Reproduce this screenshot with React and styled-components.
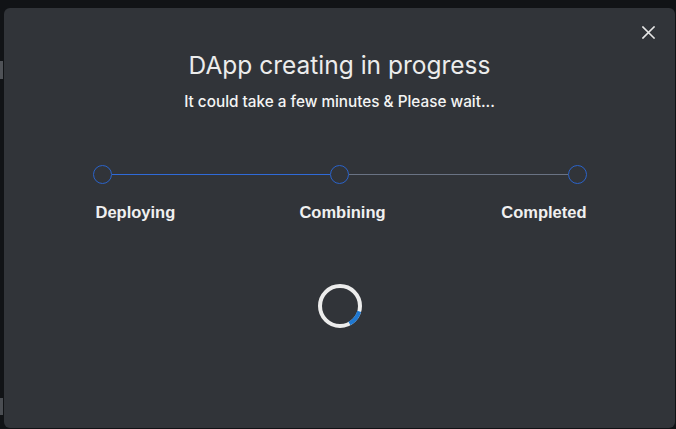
import React from "react";
import styled, { createGlobalStyle } from "styled-components";

const Global = createGlobalStyle`
  html, body { margin: 0; padding: 0; background: #111316; }
  body { width: 676px; height: 429px; overflow: hidden; font-family: Inter, "Noto Sans", sans-serif; }
`;

const Page = styled.div`
  position: relative;
  width: 676px;
  height: 429px;
  background: #111316;
`;

const SideStrip = styled.div`
  position: absolute;
  left: 0;
  top: 0;
  width: 4px;
  height: 429px;
  display: flex;
  flex-direction: column;
`;

const SideBar = styled.div`
  margin-top: ${(p) => p.$top}px;
  height: ${(p) => p.$h}px;
  width: 3px;
  background: ${(p) => p.$c};
`;

const Modal = styled.div`
  position: absolute;
  left: 4px;
  top: 8px;
  width: 671px;
  height: 420px;
  background: #313439;
  border-radius: 6px;
  display: flex;
  flex-direction: column;
  align-items: center;
  box-sizing: border-box;
  padding-top: 43px;
`;

const Close = styled.button`
  position: absolute;
  right: 19px;
  top: 16px;
  width: 16px;
  height: 16px;
  padding: 0;
  border: none;
  background: transparent;
  display: flex;
  align-items: center;
  justify-content: center;
  cursor: pointer;
`;

const Title = styled.h2`
  margin: 0;
  font-family: Inter, sans-serif;
  font-weight: 400;
  font-size: 24.5px;
  line-height: 29px;
  color: #ececec;
`;

const Subtitle = styled.p`
  margin: 13px 0 0;
  font-family: Inter, sans-serif;
  font-weight: 500;
  font-size: 15.3px;
  line-height: 18px;
  color: #f4f4f4;
`;

const Stepper = styled.div`
  margin-top: 54px;
  width: 494px;
  display: flex;
  flex-direction: column;
`;

const Track = styled.div`
  display: flex;
  align-items: center;
  height: 19px;
`;

const Dot = styled.div`
  box-sizing: border-box;
  width: 19px;
  height: 19px;
  border-radius: 50%;
  border: 1.5px solid #2b63c9;
  flex: none;
`;

const Line = styled.div`
  flex: 1;
  height: 1px;
  background: ${(p) => (p.$active ? "#2f6ad8" : "#6a7384")};
`;

const Labels = styled.div`
  margin-top: 19px;
  display: grid;
  grid-template-columns: 1fr 1fr 1fr;
  padding-left: 3px;
`;

const Label = styled.span`
  justify-self: ${(p) => p.$align};
  margin-left: ${(p) => (p.$align === "center" ? 3 : 0)}px;
  font-family: "Liberation Sans", Arial, sans-serif;
  font-weight: 700;
  font-size: 16.5px;
  line-height: 19px;
  color: #f0f0f0;
`;

const SpinnerWrap = styled.div`
  margin-top: 61px;
  width: 46px;
  height: 46px;
`;

export default function App() {
  return (
    <Page>
      <Global />
      <SideStrip>
        <SideBar $top={61} $h={18} $c="#4f5257" />
        <SideBar $top={319} $h={17} $c="#4a4d52" />
      </SideStrip>
      <Modal>
        <Close aria-label="close">
          <svg width="13" height="13" viewBox="0 0 13 13">
            <path d="M1 1L12 12M12 1L1 12" stroke="#e6e6e6" strokeWidth="1.6" strokeLinecap="square" />
          </svg>
        </Close>
        <Title>DApp creating in progress</Title>
        <Subtitle>It could take a few minutes &amp; Please wait...</Subtitle>
        <Stepper>
          <Track>
            <Dot />
            <Line $active />
            <Dot />
            <Line />
            <Dot />
          </Track>
          <Labels>
            <Label $align="start">Deploying</Label>
            <Label $align="center">Combining</Label>
            <Label $align="end">Completed</Label>
          </Labels>
        </Stepper>
        <SpinnerWrap>
          <svg width="46" height="46" viewBox="0 0 46 46">
            <circle cx="23" cy="23" r="20" fill="none" stroke="#ececec" strokeWidth="4" />
            <path
              d="M 42.2 28.4 A 20 20 0 0 1 32.4 40.6"
              fill="none"
              stroke="#1f78d1"
              strokeWidth="4"
            />
          </svg>
        </SpinnerWrap>
      </Modal>
    </Page>
  );
}
